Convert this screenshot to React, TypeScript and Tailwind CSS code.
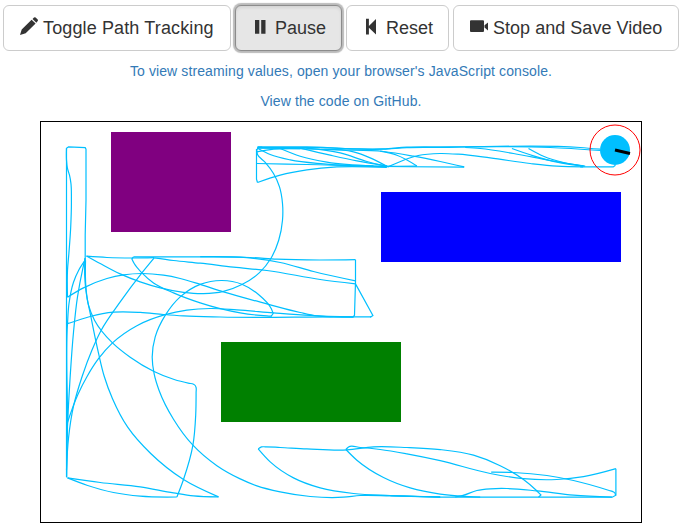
import type { ReactNode } from "react";

type Points = number[];

// Smooth curve through a flat list of x, y pairs; sharp turns stay corners.
function smooth(p: Points): string {
  const n = p.length / 2;
  const tangents = Array.from({ length: n }, (_, i) => {
    if (i === 0 || i === n - 1) return [0, 0];
    const ax = p[i * 2] - p[i * 2 - 2], ay = p[i * 2 + 1] - p[i * 2 - 1];
    const bx = p[i * 2 + 2] - p[i * 2], by = p[i * 2 + 3] - p[i * 2 + 1];
    const la = Math.hypot(ax, ay), lb = Math.hypot(bx, by);
    if ((ax * bx + ay * by) / (la * lb) < 0.6) return [0, 0];
    // Weight the shorter side more, as a parabola through three points does.
    const tx = (ax / la) * lb + (bx / lb) * la;
    const ty = (ay / la) * lb + (by / lb) * la;
    const l = Math.hypot(tx, ty);
    return [tx / l, ty / l];
  });
  let d = `M${p[0]} ${p[1]}`;
  for (let i = 0; i < n - 1; i++) {
    const [x0, y0, x1, y1] = p.slice(i * 2, i * 2 + 4);
    const h = Math.hypot(x1 - x0, y1 - y0) / 3;
    const [s, e] = [tangents[i], tangents[i + 1]];
    d += `C${x0 + s[0] * h} ${y0 + s[1] * h} ${x1 - e[0] * h} ${y1 - e[1] * h} ${x1} ${y1}`;
  }
  return d;
}

const curves: Points[] = [
  // left column
  [67.3, 297, 67.3, 270, 68.7, 253, 70.5, 227, 71.2, 200, 70.7, 183, 69.3, 175, 67.2, 168, 66.3, 160, 66.3, 148],
  [67.3, 297, 83.3, 287.7, 106.7, 278.3, 123.3, 274.7, 141.7, 273.3, 163.3, 275, 180, 278.3, 200, 284.2, 223.3, 291.7, 266.7, 303.7, 300, 312.3, 316.7, 315.7, 333, 316.7, 353, 317],
  [133.3, 256.7, 131.7, 258.7, 134, 263.3, 141.7, 272.7, 153.3, 282.7, 173.3, 292.7, 200, 302.7, 220, 308.5, 240, 312.7, 266.7, 315.7, 271.7, 316],
  [86.3, 256, 106.7, 257.3, 131.7, 257.8, 154, 257.5],
  [133.3, 256.7, 200, 256.7, 250, 257.3, 276.7, 259, 355.3, 259.5],
  [86.3, 255.7, 100, 263.3, 120, 273.7, 140, 281.7, 160, 287.7, 183.3, 292.2, 203.3, 293.5, 223.3, 291.2, 241.7, 284.3, 259, 272.7, 270.8, 258, 278.5, 240, 282.3, 220, 282.3, 203.3, 279.3, 186.7, 273.3, 173.3, 265, 162.2, 257.3, 154.3, 256.3, 149],
  [154, 257.7, 173.3, 260.3, 200, 263, 233.3, 267, 266.7, 270.3, 320, 279.3, 355.3, 283.7],
  [200, 256.5, 246.7, 257.5, 280, 262.3, 313.3, 271.3, 355.3, 280.7],
  [371, 316.7, 333, 316.7, 220, 316.8, 183.3, 315.7, 163.3, 314.3, 140, 312.2, 113.3, 312, 90, 316.3, 68, 323.3, 66.3, 320.7],
  [154, 257.7, 141.7, 272.7, 120, 301.7, 101, 330, 91.7, 350, 82, 376, 73.3, 406, 68.3, 438, 66.3, 470],
  [66.7, 424, 77.8, 394, 87, 376, 98.3, 358.5, 112.3, 342.7, 136.7, 325.5, 165, 314.5, 186.7, 310, 210, 308.3, 236.7, 309.7, 273.3, 312.7, 310, 315.3, 353.3, 316.7],
  [271, 316, 273, 313.3, 271, 308.3, 258.3, 294.3, 241.7, 284, 221.7, 280.3, 200, 284.2, 180, 296.7, 165, 315.2, 155, 336.7, 152, 356.7, 154, 374, 158.8, 390, 173.3, 419, 192.7, 445, 216.7, 465.5, 240, 478.7, 256.7, 485.7, 280, 491.7, 310, 496.3, 343.3, 497, 360, 495.3, 390, 495.7, 440, 497],
  [84.7, 258, 84.5, 275, 85.7, 290, 91, 318, 98.3, 353, 104, 376, 112.2, 398.3, 127.5, 427, 150.5, 453.3, 183.3, 479.3, 218.3, 496.7],
  [218.3, 496.7, 193.3, 495.7, 173.3, 492.7, 140, 486.7, 100, 482.3, 67.3, 477.7],
  [67.3, 477.7, 86.7, 485, 113.3, 492.3, 140, 496, 176.7, 496.8],
  [176.7, 496.8, 183.3, 479.3, 192.7, 445, 195.5, 415, 195.9, 392, 195.9, 387.3, 195, 385.3, 193.3, 384, 189, 383.1, 174, 379.3, 153.3, 371, 130, 357, 112.3, 342.7, 94.3, 320, 88.3, 305, 85.7, 286.7, 85.3, 260],
  [85, 260, 78.5, 270, 73.3, 282, 68.8, 303.3, 67.3, 323.3, 67.3, 423, 66.5, 477],
  [85, 258, 82.7, 268, 77.3, 296.7, 73.3, 332, 70, 376, 68.3, 405, 66.7, 436.7],
  // bottom right
  [455, 496.8, 462, 495.5, 476.7, 490.3, 490, 488.6, 506.7, 488.3, 536.7, 490.7, 573.3, 495, 611.7, 497],
  [615.7, 468.5, 583.3, 476.5, 556.7, 479.3, 523.3, 478.5, 490, 473.3, 440, 460.5, 406.7, 453.7, 380, 449.3, 360, 447.3, 348.3, 446.7, 345.7, 449.3],
  [345.7, 449.3, 356.7, 460, 383.3, 477.3, 410, 487.7, 440, 493.9, 460, 496, 480, 497],
  [538.3, 497, 540.7, 494.7, 536, 490, 523.3, 479.3, 500, 465.5, 473.3, 455, 440, 449.4, 406.7, 447.3, 373.3, 446.7, 346.7, 449.7, 306.7, 448.7, 280, 447.3, 265, 446.6, 261.3, 446.7, 258, 448.7],
  [258, 448.7, 270, 461.7, 293.3, 477.7, 320, 487.7, 353.3, 493.3, 390, 495.3, 440, 496.7],
  [491, 472, 513.3, 472.3, 546.7, 475.3, 573.3, 480.3, 609, 490.3, 613.3, 491.7, 614.8, 493, 615.3, 495],
  // top right
  [257.3, 182.3, 280, 175, 306.7, 169.7, 336.7, 166.7, 386.7, 167.3],
  [256.7, 163.3, 306.7, 164.3, 383.3, 166, 416.7, 166],
  [257.3, 148, 300, 148.5, 340, 149.7, 383.3, 151.3, 413.3, 156, 440, 161.3, 464, 166.7],
  [257.3, 148, 270, 154.3, 290, 159.7, 323.3, 163.7, 386, 166.5],
  [280, 148.3, 300, 156, 326.7, 162, 373.3, 165.7],
  [300, 148, 330, 155, 356.7, 160.7, 386.7, 165.7],
  [306, 148, 340, 152.7, 366.7, 161.3, 386.7, 166.3],
  [320, 149.3, 353.3, 151.7, 370, 157.7, 387.7, 166.7],
  [387.7, 166.7, 403.3, 160, 418, 155.3, 440, 153.3, 458, 154, 490, 157.7, 530, 163.3, 556.7, 166, 583, 166.7],
  [380, 151, 396.7, 155, 416.7, 165.7],
  [257.3, 146.7, 306.7, 146.7, 356.7, 148.7, 383, 148.7, 406.7, 147, 440, 146.7, 550, 147.3, 600, 150.3],
  [257.3, 147.5, 320, 147.5, 383, 149, 406.7, 147.5, 440, 147.3, 580, 147.3, 600, 149],
  [256.7, 151.7, 273.3, 149, 300, 148.5],
  [465, 147.3, 480, 148.3, 513.3, 153.3, 550, 160.3, 583.3, 165.7],
  [511.7, 148.3, 533.3, 155.7, 556.7, 162, 583.3, 166],
  [528.3, 148.3, 543.3, 156, 563.3, 162.3, 585, 166],
];

const straights = [
  "M66.3 477V148L68.3 146.6L85 147.5L85.8 149V200L85 235V260",
  "M256.3 149V179L257.3 182.3",
  "M256.5 150L258 147H262",
  "M353 317L354.3 315L355.3 281.5V259.5",
  "M355.3 283.7L372.7 315.3L370 317",
  "M380 166.3L464 166.9M580 166.7H613L615.3 165",
  "M390 495.5L440 497H612L615.7 495V468.5",
];

const iconPaths = {
  pencil: "M0 16L1.7 10.4L11.6 0.7L15.6 4.6L5.7 14.3ZM12.5 -0.1L14 -1.5Q14.8 -2.2 15.6 -1.5L17.7 0.5Q18.4 1.3 17.7 2.1L16.4 3.7Z",
  pause: "M3 1H7.3V14.8H3ZM9.2 1H13.5V14.8H9.2Z",
  back: "M3 -0.3H5.9V7L13 0V15.6L5.9 8.8V15.6H3Z",
  video: "M1 1.2H13Q14 1.2 14 2.2V12Q14 13 13 13H1Q0 13 0 12V2.2Q0 1.2 1 1.2ZM14.5 6.3L18 3.4V11.5L14.5 8.4Z",
};

function Icon({ name }: { name: keyof typeof iconPaths }) {
  return (
    <svg className="block h-[18px] w-[18px] shrink-0 overflow-visible" viewBox="0 0 18 18" fill="#333">
      <path d={iconPaths[name]} />
    </svg>
  );
}

function Button({ className, children }: { className: string; children: ReactNode }) {
  return (
    <button
      className={`flex h-[46px] shrink-0 items-center gap-[5px] rounded-md border pl-4 text-[18px] leading-6 whitespace-nowrap text-[#333] ${className}`}
    >
      {children}
    </button>
  );
}

export default function App() {
  return (
    <div className="h-[529px] w-[682px] overflow-hidden bg-white pt-[5px] font-['Liberation_Sans',Arial,sans-serif]">
      <div className="flex pl-[3px]">
        <Button className="w-[228px] border-[#ccc] bg-white tracking-[0.13px]">
          <Icon name="pencil" />
          <span>Toggle Path Tracking</span>
        </Button>
        <Button className="ml-1 w-[107px] border-[#8c8c8c] bg-[#e6e6e6] shadow-[inset_0_2px_3px_rgba(0,0,0,0.08),0_0_1px_2px_#bbb]">
          <Icon name="pause" />
          <span>Pause</span>
        </Button>
        <Button className="ml-1 w-[103px] border-[#ccc] bg-white">
          <Icon name="back" />
          <span>Reset</span>
        </Button>
        <Button className="ml-1 w-[226px] border-[#ccc] bg-white tracking-[0.03px]">
          <Icon name="video" />
          <span>Stop and Save Video</span>
        </Button>
      </div>
      <div className="mt-[10px] text-center text-[14px] leading-5 tracking-[0.11px] text-[#337ab7]">
        <p>To view streaming values, open your browser's JavaScript console.</p>
        <p className="mt-[10px]">View the code on GitHub.</p>
      </div>
      <svg className="mt-[10px] ml-10 block h-[402px] w-[602px]" viewBox="40 121 602 402" fill="none">
        <rect x="40.5" y="121.5" width="601" height="401" stroke="#000" />
        <rect x="111" y="132" width="120" height="100" fill="#800080" />
        <rect x="381" y="192" width="240" height="70" fill="#0000ff" />
        <rect x="221" y="342" width="180" height="80" fill="#008000" />
        <g stroke="#00bfff" strokeWidth="1.2" transform="translate(0.2 0.2)">
          {curves.map((c, i) => (
            <path key={i} d={smooth(c)} />
          ))}
          {straights.map((d) => (
            <path key={d} d={d} />
          ))}
        </g>
        <circle cx="615" cy="150" r="15" fill="#00bfff" />
        <circle cx="615" cy="150" r="25" stroke="#f00" />
        <path d="M615 150L630 153.5" stroke="#000" strokeWidth="3" />
      </svg>
    </div>
  );
}
